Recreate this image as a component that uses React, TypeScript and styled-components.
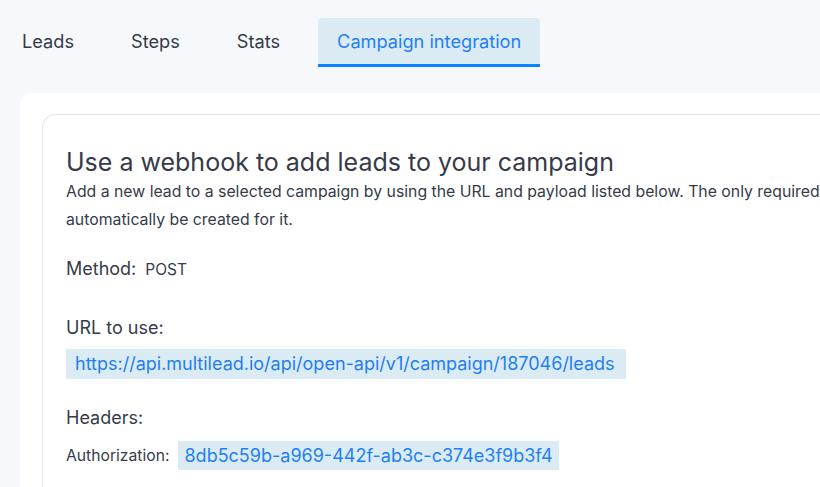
import styled, { createGlobalStyle } from 'styled-components';

const GlobalStyle = createGlobalStyle`
  html, body {
    margin: 0;
    padding: 0;
    background: #f7f8fc;
    font-family: Inter, 'Noto Sans', sans-serif;
    color: #363b49;
    overflow: hidden;
  }
`;

const tabs = ['Leads', 'Steps', 'Stats', 'Campaign integration'];

const App = () => {
  const active = 'Campaign integration';
  const campaignId = 187046;
  const apiKey = '8db5c59b-a969-442f-ab3c-c374e3f9b3f4';

  return (
    <Page>
      <GlobalStyle />
      <TabBar>
        {tabs.map((tab) => (
          <Tab key={tab} $active={tab === active}>
            {tab}
          </Tab>
        ))}
      </TabBar>
      <Panel>
        <Card>
          <Title>Use a webhook to add leads to your campaign</Title>
          <Description>
            Add a new lead to a selected campaign by using the URL and payload listed below. The only required
            field is the email address. If the lead does not exist yet, a new contact will automatically be
            created for it.
          </Description>
          <MethodRow>
            <Label>Method:</Label>
            <MethodValue>POST</MethodValue>
          </MethodRow>
          <Section $top={35} $gap={9}>
            <Label>URL to use:</Label>
            <UrlBox>https://api.multilead.io/api/open-api/v1/campaign/{campaignId}/leads</UrlBox>
          </Section>
          <Section $top={27} $gap={11}>
            <Label>Headers:</Label>
            <HeaderRow>
              <HeaderKey>Authorization:</HeaderKey>
              <KeyBox>{apiKey}</KeyBox>
            </HeaderRow>
          </Section>
        </Card>
      </Panel>
    </Page>
  );
};

const Page = styled.div`
  width: 820px;
  height: 487px;
  display: flex;
  flex-direction: column;
  padding-top: 18px;
  box-sizing: border-box;
`;

const TabBar = styled.div`
  display: flex;
  gap: 19px;
  padding-left: 3px;
  height: 49px;
`;

const Tab = styled.div<{ $active?: boolean }>`
  display: flex;
  align-items: center;
  padding: 0 19px;
  height: 46px;
  font-size: 18.2px;
  font-weight: 400;
  white-space: nowrap;
  color: ${(p) => (p.$active ? '#1f7ff3' : '#363b49')};
  background: ${(p) => (p.$active ? '#dbebf4' : 'transparent')};
  border-bottom: 3px solid ${(p) => (p.$active ? '#0a84ff' : 'transparent')};
  border-radius: 4px 4px 0 0;
`;

const Panel = styled.div`
  margin: 26px 0 0 20px;
  padding: 21px 0 0 22px;
  background: #ffffff;
  border-radius: 12px 0 0 0;
  flex: 1;
  display: flex;
  min-width: 0;
`;

const Card = styled.div`
  flex: 1;
  min-width: 0;
  border: 1px solid #e3e6ee;
  border-right: none;
  border-bottom: none;
  border-radius: 14px 0 0 0;
  padding: 31px 0 0 23px;
  overflow: hidden;
  display: flex;
  flex-direction: column;
`;

const Title = styled.h2`
  margin: 0;
  font-size: 25px;
  font-weight: 400;
  line-height: 32px;
  white-space: nowrap;
`;

const Description = styled.p`
  margin: 0;
  width: 1320px;
  flex-shrink: 0;
  font-size: 15.8px;
  line-height: 28px;
`;

const MethodRow = styled.div`
  display: flex;
  align-items: baseline;
  gap: 9px;
  margin-top: 23px;
`;

const Label = styled.div`
  font-size: 18px;
  line-height: 24px;
`;

const MethodValue = styled.span`
  font-size: 15.5px;
`;

const Section = styled.div<{ $top: number; $gap: number }>`
  display: flex;
  flex-direction: column;
  align-items: flex-start;
  margin-top: ${(p) => p.$top}px;
  gap: ${(p) => p.$gap}px;
`;

const UrlBox = styled.div`
  background: #dbebf4;
  color: #1f7ff3;
  font-size: 18px;
  line-height: 30px;
  padding: 0 11px 0 9px;
  white-space: nowrap;
`;

const HeaderRow = styled.div`
  display: flex;
  align-items: center;
  gap: 9px;
`;

const HeaderKey = styled.span`
  font-size: 15.7px;
`;

const KeyBox = styled.span`
  background: #dbebf4;
  color: #1f7ff3;
  font-size: 18px;
  line-height: 29px;
  padding: 0 6px;
  white-space: nowrap;
`;

export default App;
